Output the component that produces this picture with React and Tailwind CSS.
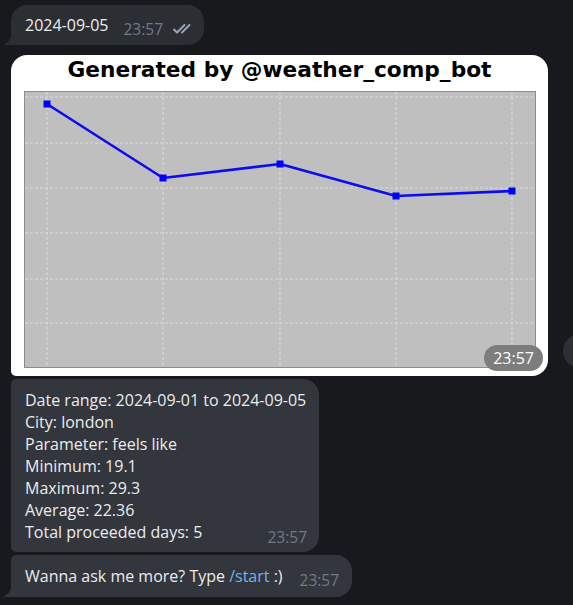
import React from "react";

const Tail = ({ color }) => (
  <svg
    className="absolute bottom-0 left-[-9px]"
    width="10"
    height="13"
    viewBox="0 0 10 13"
  >
    <path d="M9.5 0 C9.5 7 6 11 0.5 13 L10 13 L10 0 Z" fill={color} />
  </svg>
);

const DoubleCheck = () => (
  <svg width="21" height="10" viewBox="0 0 21 10" fill="none">
    <path
      d="M1 5.5 L4 8.5 L11.5 1"
      stroke="#9aabbf"
      strokeWidth="1.8"
      strokeLinecap="round"
      strokeLinejoin="round"
    />
    <path
      d="M9 8.5 L16.5 1"
      stroke="#9aabbf"
      strokeWidth="1.8"
      strokeLinecap="round"
    />
  </svg>
);

const Chart = () => {
  const xs = [23, 139, 256, 372, 488];
  const ys = [6, 52, 97, 142, 188, 232];
  const pts = [
    [23, 13],
    [139, 87],
    [256, 73],
    [372, 105],
    [488, 100],
  ];
  return (
    <svg width="512" height="277" viewBox="0 0 512 277" className="block">
      <rect x="0.5" y="0.5" width="511" height="276" fill="#bfbfbf" stroke="#8c8c8c" />
      {xs.map((x) => (
        <line key={"v" + x} x1={x} y1="1" x2={x} y2="276" stroke="#dadada" strokeWidth="1" strokeDasharray="3 2" />
      ))}
      {ys.map((y) => (
        <line key={"h" + y} x1="1" y1={y} x2="511" y2={y} stroke="#dadada" strokeWidth="1" strokeDasharray="3 2" />
      ))}
      <polyline
        points={pts.map((p) => p.join(",")).join(" ")}
        fill="none"
        stroke="#0c0cec"
        strokeWidth="2.6"
        strokeLinejoin="round"
      />
      {pts.map(([x, y]) => (
        <rect key={"m" + x} x={x - 3.5} y={y - 3.5} width="7" height="7" fill="#0000ff" />
      ))}
    </svg>
  );
};

export default function App() {
  return (
    <div
      className="relative w-[573px] h-[605px] overflow-hidden bg-[#18191d] pl-[11px] pt-[5px] flex flex-col text-[#ebecee]"
      style={{ fontFamily: '"Open Sans", "Noto Sans", sans-serif' }}
    >
      {/* first outgoing bubble */}
      <div className="relative w-[193px] h-[40px] bg-[#2b2f34] rounded-[16px] rounded-bl-none flex items-center pl-[14px]">
        <Tail color="#2b2f34" />
        <span className="text-[16px] leading-[20px]">2024-09-05</span>
        <span className="ml-[15px] mt-[8px] text-[15.5px] leading-[18px] text-[#6f7a86]">23:57</span>
        <span className="ml-[10px] mt-[8px]">
          <DoubleCheck />
        </span>
      </div>

      {/* image bubble */}
      <div className="relative mt-[10px] w-[537px] h-[321px] bg-white rounded-[16px] rounded-bl-[5px] flex flex-col">
        <div
          className="pt-[1px] text-center text-[21.7px] leading-[27px] font-bold text-black"
          style={{ fontFamily: '"DejaVu Sans", sans-serif' }}
        >
          Generated by @weather_comp_bot
        </div>
        <div className="mt-[8px] ml-[13px]">
          <Chart />
        </div>
        <div className="absolute right-[5px] bottom-[5px] h-[26px] px-[9px] rounded-full bg-[#7d7d7d] flex items-center text-[16px] text-white">
          23:57
        </div>
      </div>

      {/* text bubble */}
      <div className="relative mt-[3px] w-[308px] h-[173px] bg-[#33363c] rounded-[16px] rounded-tl-[5px] rounded-bl-[5px] pl-[14px] pr-[12px] pt-[10px] text-[16px] leading-[22px]">
        <div>Date range: 2024-09-01 to 2024-09-05</div>
        <div>City: london</div>
        <div>Parameter: feels like</div>
        <div>Minimum: 19.1</div>
        <div>Maximum: 29.3</div>
        <div>Average: 22.36</div>
        <div className="flex items-start">
          <span>Total proceeded days: 5</span>
          <span className="ml-auto mt-[5px] text-[15.5px] leading-[22px] text-[#6f7a86]">23:57</span>
        </div>
      </div>

      {/* last bubble */}
      <div className="relative mt-[3px] w-[341px] h-[42px] bg-[#33363c] rounded-[16px] rounded-tl-[5px] rounded-bl-none flex items-center pl-[14px] text-[16px] leading-[22px]">
        <Tail color="#33363c" />
        <span>
          Wanna ask me more? Type <span className="text-[#71b1ea]">/start</span> :)
        </span>
        <span className="ml-[17px] mt-[7px] text-[15.5px] leading-[22px] text-[#6f7a86]">23:57</span>
      </div>

      {/* partial forward button */}
      <div className="absolute left-[563px] top-[334px] w-[34px] h-[34px] rounded-full bg-[#2c2f35]" />
    </div>
  );
}
